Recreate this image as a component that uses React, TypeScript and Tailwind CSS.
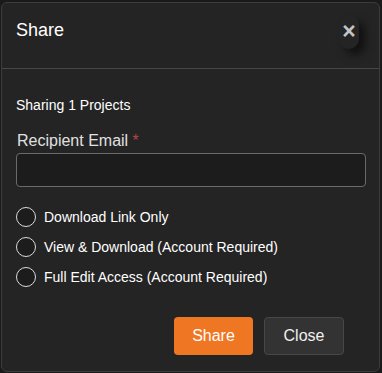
import React from "react";

export default function App() {
  const options = [
    "Download Link Only",
    "View & Download (Account Required)",
    "Full Edit Access (Account Required)",
  ];
  return (
    <div
      className="w-[382px] h-[373px] bg-[#1a1a1a] pt-[2px] pl-[1px]"
      style={{ fontFamily: '"Liberation Sans", Arial, sans-serif' }}
    >
      <div className="w-[379px] h-[370px] bg-[#242424] border border-[#3c3c3c] rounded-[6px] flex flex-col">
        <div className="h-[66px] flex items-start justify-between border-b border-[#474747] pl-[14px] pr-[20px]">
          <div className="text-[18px] text-white mt-[17px] leading-[20px]">Share</div>
          <button className="mt-[12px] w-[20px] h-[34px] rounded-full flex items-start justify-center pt-[6px] text-[#c4c4c4] text-[23px] font-bold leading-[20px] shadow-[6px_6px_8px_rgba(0,0,0,0.55)]">
            ×
          </button>
        </div>
        <div className="px-[14px] pt-[29px]">
          <div className="text-[14px] text-white leading-[15px]">Sharing 1 Projects</div>
          <div className="mt-[19px] text-[16px] text-[#e0e0e0] leading-[18px] pl-[1px]">
            Recipient Email <span className="text-[#b04848]">*</span>
          </div>
          <div className="mt-[3px] w-[350px] h-[34px] bg-[#1c1c1c] border border-[#6a6a6a] rounded-[4px]"></div>
          <div className="mt-[20px] flex flex-col gap-[10px]">
            {options.map((o) => (
              <label key={o} className="flex items-center gap-[8px] h-[20px]">
                <span className="w-[20px] h-[20px] rounded-full border-[1.5px] border-[#dcdcdc] bg-[#1c1c1c] shrink-0"></span>
                <span className="text-[14px] text-white">{o}</span>
              </label>
            ))}
          </div>
        </div>
        <div className="flex justify-end gap-[11px] pr-[35px] mt-[30px]">
          <button className="w-[79px] h-[38px] rounded-[4px] bg-[#ef7622] text-white text-[16px]">
            Share
          </button>
          <button className="w-[80px] h-[38px] rounded-[4px] bg-[#333333] border border-[#474747] text-[#f0f0f0] text-[16px]">
            Close
          </button>
        </div>
      </div>
    </div>
  );
}
